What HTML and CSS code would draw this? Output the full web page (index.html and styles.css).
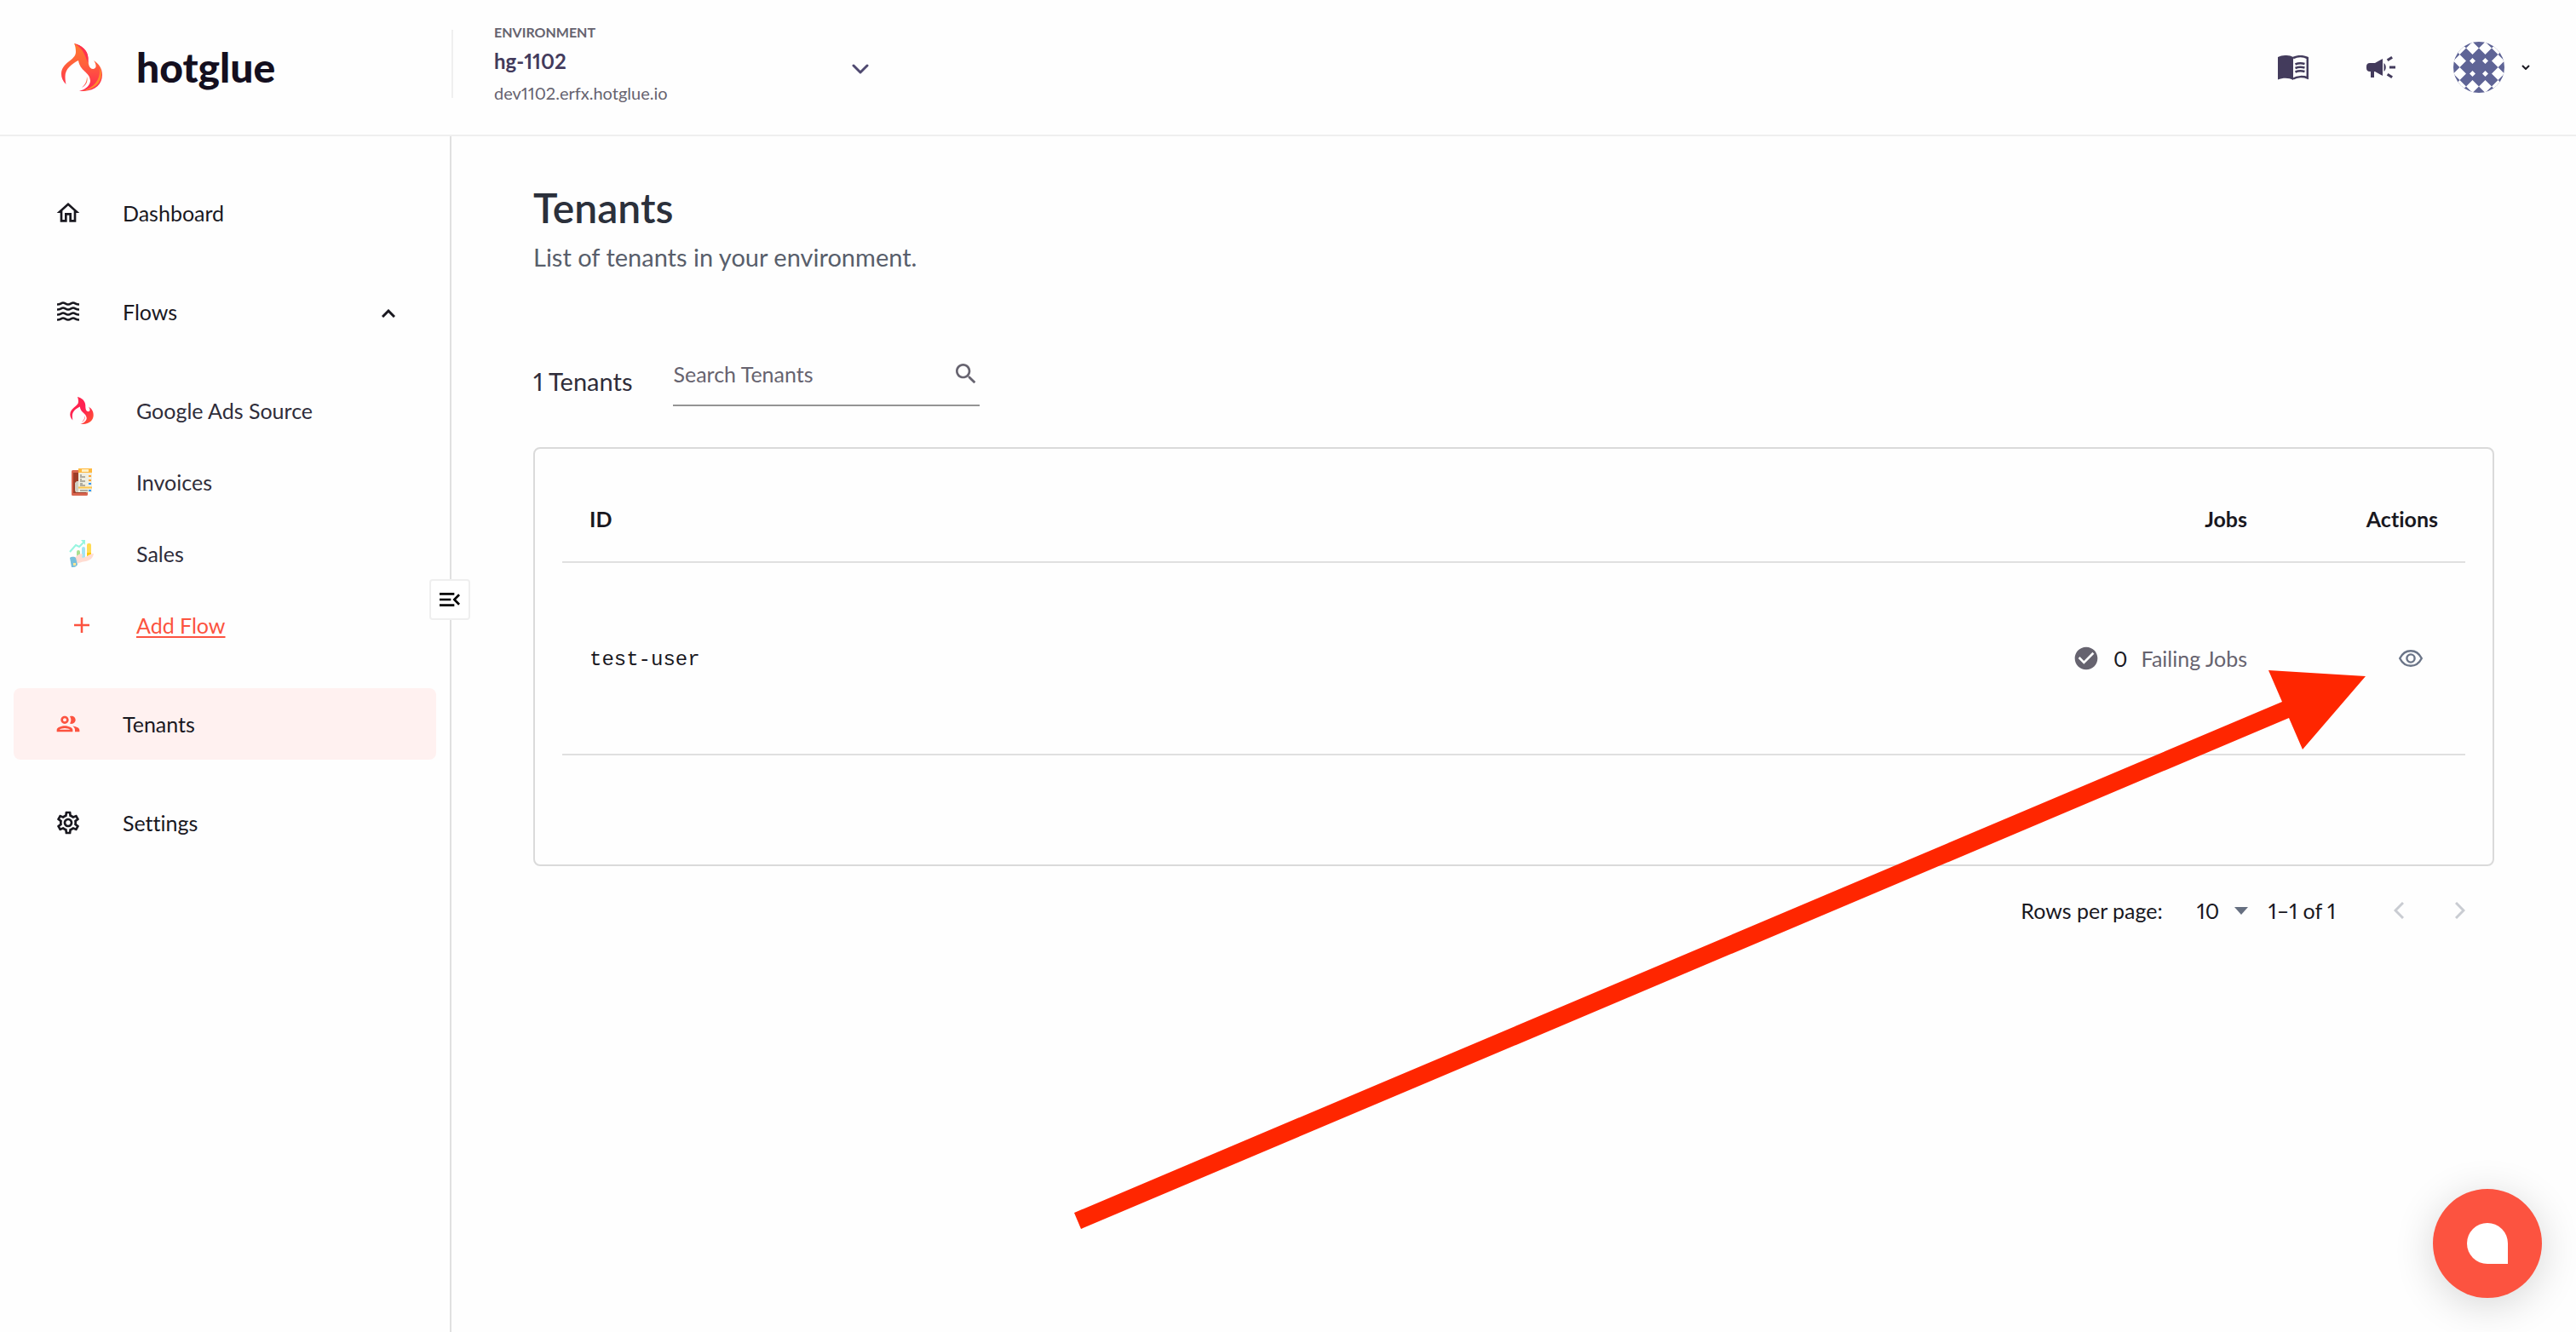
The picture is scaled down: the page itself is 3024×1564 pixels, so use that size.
FILE: index.html
```
<!DOCTYPE html>
<html lang="en">
<head>
    <meta charset="UTF-8">
    <meta name="viewport" content="width=device-width, initial-scale=1.0">
    <title>Tenants - hotglue</title>
    <link rel="stylesheet" href="styles.css">
</head>
<body>

<!-- shared flame shape, used by the logo and the first flow -->
<svg class="defs" width="0" height="0" aria-hidden="true">
    <defs>
        <linearGradient id="flame-orange" x1="0" y1="0" x2="0" y2="1">
            <stop offset="0" stop-color="#ff7a2e"/>
            <stop offset="0.45" stop-color="#ff5f3c"/>
            <stop offset="1" stop-color="#ff2453"/>
        </linearGradient>
        <linearGradient id="flame-red" x1="0" y1="0" x2="1" y2="1">
            <stop offset="0" stop-color="#ff2a44"/>
            <stop offset="0.5" stop-color="#ff1f55"/>
            <stop offset="1" stop-color="#ff5a2c"/>
        </linearGradient>
        <symbol id="flame" viewBox="0 0 48 56">
            <path d="M15 0C24 2 31 8 31.5 17C31.5 23 32 30 37.5 30C42 29.5 41 24 38 20C44 24 48 29 48 37C48 49 38 57 21 56C29 54 34 49 34 43.5C33 33 22 33 20 20C12 24 4.5 30 4.5 39C4.5 43 5 46 5.5 48C1.5 44 0 40 0 36C0 22 17 20 17 10C17 6 16.5 3 15 0Z"/>
            <path d="M30 39C32 45 28 50 24 52C28 48 30 45 30 39Z"/>
        </symbol>
    </defs>
</svg>

<header class="topbar">
    <a class="brand" href="#">
        <svg class="brand-mark" viewBox="0 0 48 56" aria-hidden="true">
            <use href="#flame" fill="url(#flame-orange)"/>
            <path d="M15 0C24 2 31 8 31.5 17L31.5 23C28 16 27 6 15 0Z" fill="#ff3050"/>
            <path d="M45 28C51 42 42 54 24 56C40 51 46 42 45 28Z" fill="#ff8a2e"/>
        </svg>
        <span class="brand-name">hotglue</span>
    </a>
    <button class="environment" type="button">
        <span class="environment-text">
            <span class="environment-label">Environment</span>
            <span class="environment-name">hg-1102</span>
            <span class="environment-url">dev1102.erfx.hotglue.io</span>
        </span>
        <svg class="environment-arrow" viewBox="0 0 20 12" fill="none" stroke="#4f4970" stroke-width="3" stroke-linecap="round" stroke-linejoin="round"><path d="M2 2l8 8 8-8"/></svg>
    </button>
    <div class="tools">
        <button class="tool" type="button" aria-label="Documentation">
            <svg viewBox="0 0 36 29" width="36" height="29">
                <path fill="#433b5c" d="M0 2C6-.7 13-.7 18 2V29C13 26 6 26 0 28.5Z"/>
                <path fill="none" stroke="#433b5c" stroke-width="2.5" d="M18 3C23 .8 30 .8 34.8 3V26.5C30 24.5 23 24.5 18 27.5M20.5 10.5C24 9 28 9 31.5 10M20.5 15C24 13.5 28 13.5 31.5 14.5M20.5 19.5C24 18 28 18 31.5 19"/>
            </svg>
        </button>
        <button class="tool" type="button" aria-label="Announcements">
            <svg viewBox="0 0 34 26" width="34" height="26" fill="#433b5c">
                <path d="M4 8H10L19 3V23L10 18H9V25H5V18H4C1.5 18 0 16.5 0 14V12C0 9.5 1.5 8 4 8ZM20.5 8C23.5 10.5 23.5 15.5 20.5 18ZM27 11.5H34V14.5H27ZM23.8 3.5L29.3 0L31 2.5L25.5 6ZM25.5 20L31 23.5L29.3 26L23.8 22.5Z"/>
            </svg>
        </button>
        <button class="account" type="button" aria-label="Account">
            <svg viewBox="0 0 60 60" width="60" height="60">
                <defs>
                    <clipPath id="avatar-clip"><circle cx="30" cy="30" r="30"/></clipPath>
                </defs>
                <g clip-path="url(#avatar-clip)">
                    <rect width="60" height="60" fill="#5f6496"/>
                    <path fill="#fff" d="M22.5 0l7.5 7.5-7.5 7.5-7.5-7.5zM37.5 0l7.5 7.5-7.5 7.5-7.5-7.5zM22.5 45l7.5 7.5-7.5 7.5-7.5-7.5zM37.5 45l7.5 7.5-7.5 7.5-7.5-7.5zM7.5 15l7.5 7.5-7.5 7.5-7.5-7.5zM52.5 15l7.5 7.5-7.5 7.5-7.5-7.5zM7.5 30l7.5 7.5-7.5 7.5-7.5-7.5zM52.5 30l7.5 7.5-7.5 7.5-7.5-7.5zM7.5 0l7.5 7.5-7.5 7.5-7.5-7.5zM52.5 0l7.5 7.5-7.5 7.5-7.5-7.5zM7.5 45l7.5 7.5-7.5 7.5-7.5-7.5zM52.5 45l7.5 7.5-7.5 7.5-7.5-7.5z"/>
                    <path fill="#fff" d="M22.5 19l3.5 3.5-3.5 3.5-3.5-3.5zM37.5 19l3.5 3.5-3.5 3.5-3.5-3.5zM22.5 34l3.5 3.5-3.5 3.5-3.5-3.5zM37.5 34l3.5 3.5-3.5 3.5-3.5-3.5z"/>
                </g>
            </svg>
            <svg viewBox="0 0 10 6" width="10" height="6" fill="none" stroke="#1b1a22" stroke-width="2"><path d="M1 1l4 4 4-4"/></svg>
        </button>
    </div>
</header>

<div class="layout">
    <aside class="sidebar">
        <nav class="nav">
            <a class="nav-item" href="#">
                <svg class="nav-icon" viewBox="0 0 24 24"><path d="M12 5.69l5 4.5V18h-2v-6H9v6H7v-7.81l5-4.5M12 3L2 12h3v8h6v-6h2v6h6v-8h3L12 3z"/></svg>
                <span>Dashboard</span>
            </a>
            <div class="nav-group">
                <button class="nav-item" type="button" aria-expanded="true">
                    <svg class="nav-icon" viewBox="0 0 32 32" fill="none" stroke="currentColor" stroke-width="2.6"><path d="M3 7.5c4.5 0 4.5-2 7-2s3 2 6 2 3.5-2 6-2 2.5 2 7 2M3 13.5c4.5 0 4.5-2 7-2s3 2 6 2 3.5-2 6-2 2.5 2 7 2M3 19.5c4.5 0 4.5-2 7-2s3 2 6 2 3.5-2 6-2 2.5 2 7 2M3 25.5c4.5 0 4.5-2 7-2s3 2 6 2 3.5-2 6-2 2.5 2 7 2"/></svg>
                    <span>Flows</span>
                    <svg class="nav-arrow" viewBox="0 0 16 10" width="16" height="10" fill="none" stroke="currentColor" stroke-width="3"><path d="M1 9l7-7 7 7"/></svg>
                </button>
                <a class="nav-item flow" href="#">
                    <svg class="nav-icon" viewBox="0 0 28 32" fill="url(#flame-red)"><use href="#flame" width="28" height="32"/></svg>
                    <span>Google Ads Source</span>
                </a>
                <a class="nav-item flow" href="#">
                    <svg class="nav-icon" viewBox="0 0 28 32">
                        <rect x="2" y="2" width="19" height="30" rx="1.5" fill="#d96650"/>
                        <rect x="4" y="5" width="15" height="24" fill="#9e3d28"/>
                        <path d="M6 17l2-2h4v13H7l-1-2z" fill="#d0cfc2"/>
                        <rect x="10" y="0" width="16" height="28" fill="#f0eee0"/>
                        <rect x="10" y="0" width="16" height="5" fill="#ffb93f"/>
                        <rect x="14" y="1" width="8" height="3" fill="#fff0c4"/>
                        <path d="M12 8h2M12 10h6M12 13h2M12 15h6M12 18h3M12 20h6M12 26h9" stroke="#6e6a60" stroke-width="1"/>
                        <path d="M22 9h3M22 14h3" stroke="#ffa52e" stroke-width="2"/>
                        <path d="M22 18h3M22 26h3" stroke="#2f97f5" stroke-width="2"/>
                        <path d="M10 22.5h16" stroke="#ffc64d" stroke-width="2"/>
                    </svg>
                    <span>Invoices</span>
                </a>
                <a class="nav-item flow" href="#">
                    <svg class="nav-icon" viewBox="0 0 28 32">
                        <path d="M0 14l7-8 4 2 6-6" fill="none" stroke="#97f5e0" stroke-width="2"/>
                        <path d="M13 0h5v6z" fill="#97f5e0"/>
                        <rect x="8" y="12" width="4" height="8" rx="2" fill="#a8e090"/>
                        <rect x="14" y="8" width="4" height="14" rx="2" fill="#a3e4f4"/>
                        <rect x="20" y="4" width="5" height="17" rx="2" fill="#ffdb55"/>
                        <rect x="20" y="15" width="5" height="5" fill="#ffc800"/>
                        <path d="M6 21c3-4 8-6 9-4l-1 4c5 0 9-5 14-5-1 6-5 8-9 9-5 1-7 1-10 3z" fill="#ffdcd2"/>
                        <path d="M0 21c3-2 6-1 7 0l2 8c-2 3-4 3-7 3z" fill="#77bfdb"/>
                        <rect x="4" y="27" width="3" height="3" fill="#ffe694"/>
                    </svg>
                    <span>Sales</span>
                </a>
                <a class="nav-item flow add-flow" href="#">
                    <svg class="nav-icon" viewBox="0 0 28 32" fill="none" stroke="currentColor" stroke-width="2.5"><path d="M14 7v18M5 16h18"/></svg>
                    <span>Add Flow</span>
                </a>
            </div>
            <a class="nav-item active" href="#" aria-current="page">
                <svg class="nav-icon" viewBox="0 0 24 24"><path d="M9 13.75c-2.34 0-7 1.17-7 3.5V19h14v-1.75c0-2.33-4.66-3.5-7-3.5zM4.34 17c.84-.58 2.87-1.25 4.66-1.25s3.82.67 4.66 1.25H4.34zM9 12c1.93 0 3.5-1.57 3.5-3.5S10.93 5 9 5 5.5 6.57 5.5 8.5 7.07 12 9 12zm0-5c.83 0 1.5.67 1.5 1.5S9.83 10 9 10s-1.5-.67-1.5-1.5S8.17 7 9 7zm7.04 6.81c1.16.84 1.96 1.96 1.96 3.44V19h4v-1.75c0-2.02-3.5-3.17-5.96-3.44zM15 12c1.93 0 3.5-1.57 3.5-3.5S16.93 5 15 5c-.54 0-1.04.13-1.5.35.63.89 1 1.98 1 3.15s-.37 2.26-1 3.15c.46.22.96.35 1.5.35z"/></svg>
                <span>Tenants</span>
            </a>
            <a class="nav-item" href="#">
                <svg class="nav-icon" viewBox="0 0 24 24"><path d="M19.43 12.98c.04-.32.07-.64.07-.98s-.03-.66-.07-.98l2.11-1.65c.19-.15.24-.42.12-.64l-2-3.46c-.09-.16-.26-.25-.44-.25-.06 0-.12.01-.17.03l-2.49 1c-.52-.4-1.08-.73-1.69-.98l-.38-2.65C14.46 2.18 14.25 2 14 2h-4c-.25 0-.46.18-.49.42l-.38 2.65c-.61.25-1.17.59-1.69.98l-2.49-1c-.06-.02-.12-.03-.18-.03-.17 0-.34.09-.43.25l-2 3.46c-.13.22-.07.49.12.64l2.11 1.65c-.04.32-.07.65-.07.98s.03.66.07.98l-2.11 1.65c-.19.15-.24.42-.12.64l2 3.46c.09.16.26.25.44.25.06 0 .12-.01.17-.03l2.49-1c.52.4 1.08.73 1.69.98l.38 2.65c.03.24.24.42.49.42h4c.25 0 .46-.18.49-.42l.38-2.65c.61-.25 1.17-.59 1.69-.98l2.49 1c.06.02.12.03.18.03.17 0 .34-.09.43-.25l2-3.46c.12-.22.07-.49-.12-.64l-2.11-1.65zm-1.98-1.71c.04.31.05.52.05.73 0 .21-.02.43-.05.73l-.14 1.13.89.7 1.08.84-.7 1.21-1.27-.51-1.04-.42-.9.68c-.43.32-.84.56-1.25.73l-1.06.43-.16 1.13-.2 1.35h-1.4l-.19-1.35-.16-1.13-1.06-.43c-.43-.18-.83-.41-1.23-.71l-.91-.7-1.06.43-1.27.51-.7-1.21 1.08-.84.89-.7-.14-1.13c-.03-.31-.05-.54-.05-.74s.02-.43.05-.73l.14-1.13-.89-.7-1.08-.84.7-1.21 1.27.51 1.04.42.9-.68c.43-.32.84-.56 1.25-.73l1.06-.43.16-1.13.2-1.35h1.39l.19 1.35.16 1.13 1.06.43c.43.18.83.41 1.23.71l.91.7 1.06-.43 1.27-.51.7 1.21-1.07.85-.89.7.14 1.13zM12 8c-2.21 0-4 1.79-4 4s1.79 4 4 4 4-1.79 4-4-1.79-4-4-4zm0 6c-1.1 0-2-.9-2-2s.9-2 2-2 2 .9 2 2-.9 2-2 2z"/></svg>
                <span>Settings</span>
            </a>
        </nav>
        <button class="collapse" type="button" aria-label="Collapse menu">
            <svg viewBox="0 0 24 24" width="32" height="32"><path d="M3 18h13v-2H3v2zM3 13h10v-2H3v2zm0-7v2h13V6H3zm18 9.59L17.42 12 21 8.41 19.59 7l-5 5 5 5L21 15.59z"/></svg>
        </button>
    </aside>

    <main class="content">
        <h1>Tenants</h1>
        <p class="subtitle">List of tenants in your environment.</p>

        <div class="toolbar">
            <h2>1 Tenants</h2>
            <label class="search">
                <input type="text" placeholder="Search Tenants" aria-label="Search Tenants">
                <svg viewBox="0 0 24 24" width="32" height="32" fill="#66636f"><path d="M15.5 14h-.79l-.28-.27C15.41 12.59 16 11.11 16 9.5 16 5.91 13.09 3 9.5 3S3 5.91 3 9.5 5.91 16 9.5 16c1.61 0 3.09-.59 4.23-1.57l.27.28v.79l5 4.99L20.49 19l-4.99-5zm-6 0C7.01 14 5 11.99 5 9.5S7.01 5 9.5 5 14 7.01 14 9.5 11.99 14 9.5 14z"/></svg>
            </label>
        </div>

        <section class="card">
            <table class="tenants">
                <thead>
                    <tr>
                        <th>ID</th>
                        <th class="right">Jobs</th>
                        <th class="right actions">Actions</th>
                    </tr>
                </thead>
                <tbody>
                    <tr>
                        <td class="tenant-id">test-user</td>
                        <td>
                            <div class="jobs">
                                <svg viewBox="0 0 24 24" width="32" height="32" fill="#66636f"><path d="M12 2C6.48 2 2 6.48 2 12s4.48 10 10 10 10-4.48 10-10S17.52 2 12 2zm-2 15l-5-5 1.41-1.41L10 14.17l7.59-7.59L19 8l-9 9z"/></svg>
                                <span class="jobs-count">0</span>
                                <span>Failing Jobs</span>
                            </div>
                        </td>
                        <td class="right">
                            <button class="view" type="button" aria-label="View tenant">
                                <svg viewBox="0 0 28 20" width="28" height="20" fill="none" stroke="#6b7588" stroke-width="2.4"><path d="M1.2 10C4 4.5 8.5 1.2 14 1.2S24 4.5 26.8 10C24 15.5 19.5 18.8 14 18.8S4 15.5 1.2 10Z"/><circle cx="14" cy="10" r="4.6"/></svg>
                            </button>
                        </td>
                    </tr>
                </tbody>
            </table>
        </section>

        <div class="pagination">
            <label for="rows">Rows per page:</label>
            <div class="rows-select">
                <select id="rows">
                    <option>10</option>
                    <option>25</option>
                    <option>50</option>
                </select>
                <svg viewBox="0 0 16 9" width="16" height="9" fill="#666f80"><path d="M0 0h16L8 9z"/></svg>
            </div>
            <span class="range">1–1 of 1</span>
            <div class="pager">
                <button type="button" disabled aria-label="Previous page"><svg viewBox="0 0 12 20" width="12" height="20"><path d="M11 1l-9 9 9 9"/></svg></button>
                <button type="button" disabled aria-label="Next page"><svg viewBox="0 0 12 20" width="12" height="20"><path d="M1 1l9 9-9 9"/></svg></button>
            </div>
        </div>
    </main>
</div>

<!-- pointer to the view action -->
<svg class="pointer" viewBox="0 0 1516 656" aria-hidden="true"><path d="M0 637L1418 37L1402 0L1516 7L1442 93L1426 56L8 656Z"/></svg>

<button class="chat" type="button" aria-label="Open chat"><span class="chat-bubble"></span></button>

</body>
</html>
```
FILE: styles.css
```
* {
    box-sizing: border-box;
}
body {
    margin: 0;
    min-height: 100vh;
    display: flex;
    flex-direction: column;
    position: relative;
    background-color: #fefefe;
    color: #19181f;
    font-family: Lato, "Liberation Sans", sans-serif;
    font-size: 25px;
    line-height: 32px;
    font-variant-ligatures: none;
    font-variant-numeric: proportional-nums;
}
button, input, select {
    font: inherit;
    font-variant-numeric: proportional-nums;
    color: inherit;
    background: none;
    border: 0;
    padding: 0;
}
button {
    cursor: pointer;
}
a {
    color: inherit;
    text-decoration: none;
}
svg {
    display: block;
    flex: none;
}
.defs {
    position: absolute;
}

/* top bar */
.topbar {
    display: flex;
    align-items: center;
    height: 160px;
    padding: 0 54px 0 72px;
    border-bottom: 2px solid #efefef;
}
.brand {
    display: flex;
    align-items: center;
    gap: 40px;
    width: 458px;
}
.brand-mark {
    width: 48px;
    height: 56px;
}
.brand-name {
    font-size: 48px;
    font-weight: 900;
    line-height: 48px;
    color: #140f1f;
}
.environment {
    display: flex;
    align-items: center;
    width: 490px;
    margin-bottom: 8px;
    text-align: left;
}
.environment::before {
    content: "";
    width: 2px;
    height: 80px;
    margin-right: 48px;
    background-color: #efefef;
}
.environment-text {
    display: flex;
    flex-direction: column;
    flex: 1;
}
.environment-label {
    font-size: 16px;
    font-weight: 700;
    text-transform: uppercase;
    color: #66636f;
}
.environment-name {
    font-size: 24px;
    font-weight: 700;
    line-height: 36px;
    color: #433b5c;
}
.environment-url {
    font-size: 20px;
    line-height: 38px;
    color: #66636f;
}
.environment-arrow {
    width: 20px;
    height: 12px;
    margin-top: 12px;
}
.tools {
    display: flex;
    align-items: center;
    gap: 68px;
    margin-left: auto;
}
.account {
    display: flex;
    align-items: center;
    gap: 20px;
}

/* sidebar */
.layout {
    display: flex;
    flex: 1;
}
.sidebar {
    position: relative;
    width: 530px;
    flex: none;
    padding: 48px 16px;
    border-right: 2px solid #e0e0e0;
}
.nav {
    display: flex;
    flex-direction: column;
    gap: 32px;
}
.nav-item {
    display: flex;
    align-items: center;
    gap: 48px;
    width: 100%;
    height: 84px;
    padding: 0 48px;
    border-radius: 8px;
    text-align: left;
}
.nav-icon {
    width: 32px;
    height: 32px;
    fill: currentColor;
}
.nav-icon[fill] {
    fill: revert-layer;
}
.nav-arrow {
    margin: 4px 0 0 auto;
}
.nav-group .nav-item:first-child {
    margin-bottom: 32px;
}
.flow {
    padding-left: 64px;
    color: #2f2d3a;
}
.add-flow {
    color: #fc5340;
}
.add-flow span {
    text-decoration: underline;
    text-underline-offset: 3px;
}
.active {
    background-color: #fff1f0;
}
.active .nav-icon {
    color: #fc5340;
}
.collapse {
    position: absolute;
    top: 520px;
    right: -24px;
    width: 48px;
    height: 48px;
    display: flex;
    align-items: center;
    justify-content: center;
    background-color: #fff;
    border: 2px solid #efefef;
    border-radius: 4px;
}

/* content */
.content {
    flex: 1;
    padding: 56px 96px;
}
h1 {
    margin: 0;
    font-size: 48px;
    font-weight: 600;
    line-height: 56px;
    color: #2b303b;
}
.subtitle {
    margin: 10px 0 0;
    font-size: 29px;
    line-height: 40px;
    color: #585e6b;
}
.toolbar {
    display: flex;
    align-items: center;
    gap: 48px;
    margin: 83px 0 48px;
}
h2 {
    margin: 0;
    padding-top: 14px;
    font-size: 29px;
    font-weight: 400;
    color: #2f2d3a;
}
.search {
    display: flex;
    width: 360px;
    height: 72px;
    padding-top: 18px;
    border-bottom: 2px solid #949494;
}
.search input {
    flex: 1;
    min-width: 0;
    height: 32px;
    outline: none;
}
.search input::placeholder {
    color: #66636f;
    opacity: 1;
}
.card {
    padding: 32px 32px 128px;
    border: 2px solid #dadada;
    border-radius: 8px;
}
.tenants {
    width: 100%;
    border-collapse: separate;
    border-spacing: 0;
}
.tenants th, .tenants td {
    padding: 0 32px;
    border-bottom: 2px solid #e0e0e0;
    text-align: left;
}
.tenants th {
    height: 102px;
    font-weight: 700;
}
.tenants td {
    height: 226px;
}
.tenants .right {
    text-align: right;
}
.actions {
    width: 224px;
}
.tenants .tenant-id {
    padding-top: 4px;
    font-family: "Liberation Mono", monospace;
    font-size: 24px;
}
.jobs {
    display: flex;
    align-items: center;
    justify-content: flex-end;
    gap: 16px;
    color: #66636f;
}
.jobs-count {
    color: #19181f;
}
.view {
    display: inline-flex;
    align-items: center;
    justify-content: center;
    width: 64px;
    height: 64px;
    vertical-align: middle;
}
.pagination {
    display: flex;
    align-items: center;
    justify-content: flex-end;
    height: 104px;
    padding-right: 16px;
}
.rows-select {
    display: flex;
    align-items: center;
    margin: 0 24px 0 40px;
}
.rows-select select {
    appearance: none;
    width: 60px;
    margin-right: -16px;
    outline: none;
}
.pager {
    display: flex;
    margin-left: 50px;
}
.pager button {
    display: flex;
    align-items: center;
    justify-content: center;
    width: 48px;
    height: 48px;
}
.pager button + button {
    margin-left: 24px;
}
.pager path {
    fill: none;
    stroke: #c9ccd2;
    stroke-width: 3;
}

/* floating parts */
.pointer {
    position: absolute;
    top: 787px;
    right: 247px;
    width: 1516px;
    height: 656px;
    fill: #ff2600;
    pointer-events: none;
}
.chat {
    position: fixed;
    right: 40px;
    bottom: 40px;
    width: 128px;
    height: 128px;
    display: flex;
    align-items: center;
    justify-content: center;
    border-radius: 50%;
    background-color: #fc5340;
    box-shadow: 0 8px 48px rgba(0, 0, 0, 0.16);
}
.chat-bubble {
    width: 48px;
    height: 48px;
    border-radius: 50% 50% 0 50%;
    background-color: #fff;
}
```
